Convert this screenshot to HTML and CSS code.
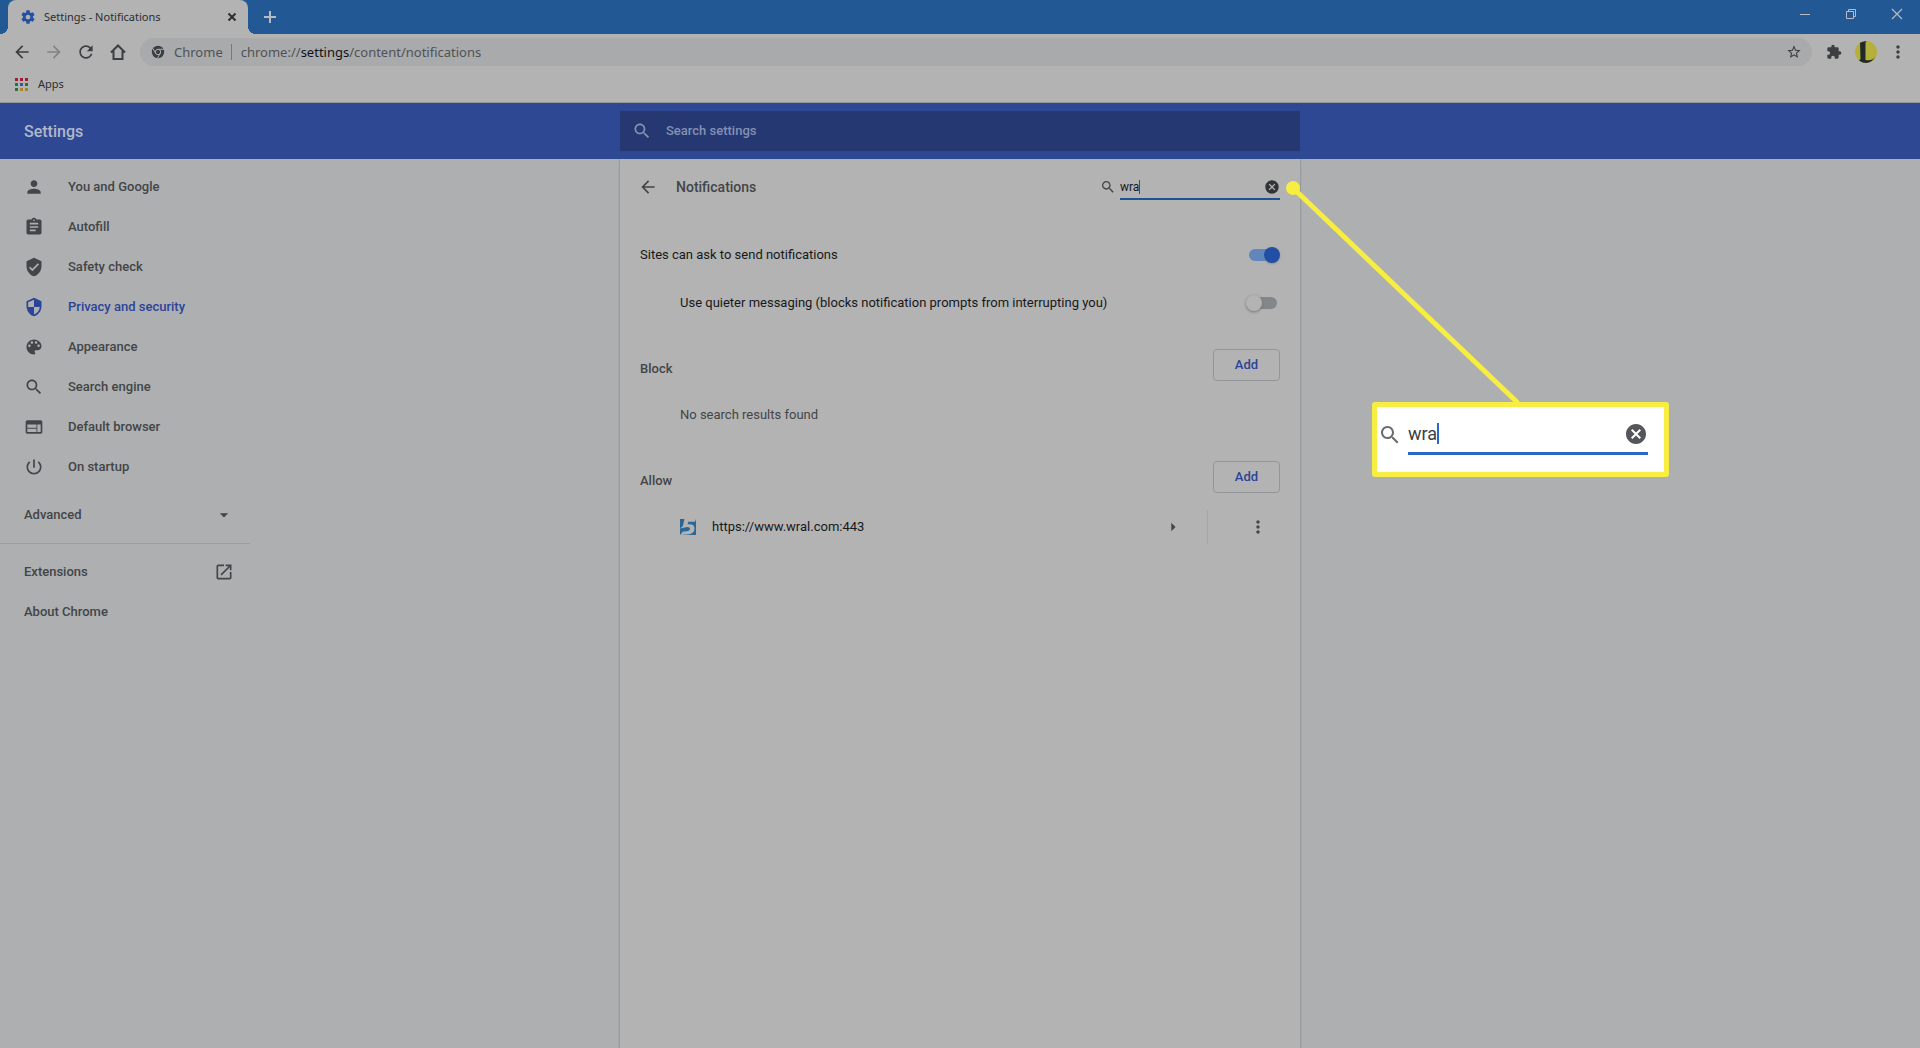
FILE: index.html
```html
<!DOCTYPE html>
<html lang="en">
<head>
<meta charset="utf-8">
<title>Settings - Notifications</title>
<link rel="stylesheet" href="styles.css">
</head>
<body>
<svg class="sprite" aria-hidden="true">
  <symbol id="search" viewBox="0 0 24 24"><path d="M15.5 14h-.79l-.28-.27C15.41 12.59 16 11.11 16 9.5 16 5.91 13.09 3 9.5 3S3 5.91 3 9.5 5.91 16 9.5 16c1.61 0 3.09-.59 4.23-1.57l.27.28v.79l5 4.99L20.49 19l-4.99-5zm-6 0C7.01 14 5 11.99 5 9.5S7.01 5 9.5 5 14 7.01 14 9.5 11.99 14 9.5 14z"/></symbol>
  <symbol id="back" viewBox="0 0 24 24"><path d="M20 11H7.83l5.59-5.59L12 4l-8 8 8 8 1.41-1.41L7.83 13H20v-2z"/></symbol>
  <symbol id="cancel" viewBox="0 0 24 24"><path d="M12 2C6.47 2 2 6.47 2 12s4.47 10 10 10 10-4.47 10-10S17.53 2 12 2zm5 13.59L15.59 17 12 13.41 8.41 17 7 15.59 10.59 12 7 8.41 8.41 7 12 10.59 15.59 7 17 8.41 13.41 12 17 15.59z"/></symbol>
  <symbol id="dots" viewBox="0 0 24 24"><path d="M12 8c1.1 0 2-.9 2-2s-.9-2-2-2-2 .9-2 2 .9 2 2 2zm0 2c-1.1 0-2 .9-2 2s.9 2 2 2 2-.9 2-2-.9-2-2-2zm0 6c-1.1 0-2 .9-2 2s.9 2 2 2 2-.9 2-2-.9-2-2-2z"/></symbol>
</svg>

<header class="browser">
  <div class="tabstrip">
    <div class="tab">
      <svg class="icon tab-icon" viewBox="0 0 24 24"><path d="M19.43 12.98c.04-.32.07-.64.07-.98s-.03-.66-.07-.98l2.11-1.65c.19-.15.24-.42.12-.64l-2-3.46c-.12-.22-.39-.3-.61-.22l-2.49 1c-.52-.4-1.08-.73-1.69-.98l-.38-2.65C14.46 2.18 14.25 2 14 2h-4c-.25 0-.46.18-.49.42l-.38 2.65c-.61.25-1.17.59-1.69.98l-2.49-1c-.23-.09-.49 0-.61.22l-2 3.46c-.13.22-.07.49.12.64l2.11 1.65c-.04.32-.07.65-.07.98s.03.66.07.98l-2.11 1.65c-.19.15-.24.42-.12.64l2 3.46c.12.22.39.3.61.22l2.49-1c.52.4 1.08.73 1.69.98l.38 2.65c.03.24.24.42.49.42h4c.25 0 .46-.18.49-.42l.38-2.65c.61-.25 1.17-.59 1.69-.98l2.49 1c.23.09.49 0 .61-.22l2-3.46c.12-.22.07-.49-.12-.64l-2.11-1.65zM12 15.5c-1.93 0-3.5-1.57-3.5-3.5s1.57-3.5 3.5-3.5 3.5 1.57 3.5 3.5-1.57 3.5-3.5 3.5z"/></svg>
      <span class="tab-title">Settings - Notifications</span>
      <button class="plain tab-close" aria-label="Close tab"><svg class="line" viewBox="0 0 16 16" width="16" height="16"><path d="M4.500 4.500l7 7M11.500 4.500l-7 7" stroke-width="2"/></svg></button>
    </div>
    <button class="plain new-tab" aria-label="New tab"><svg class="line" viewBox="0 0 16 16" width="16" height="16"><path d="M8 2v12M2 8h12" stroke-width="2"/></svg></button>
    <div class="window-controls">
      <button class="plain" aria-label="Minimize"><svg class="line" viewBox="0 0 12 12" width="12" height="12"><path d="M1 6.5h10"/></svg></button>
      <button class="plain" aria-label="Restore"><svg class="line" viewBox="0 0 12 12" width="12" height="12"><path d="M1.500 3.500h7v7h-7zM3.500 3.500v-2h7v7h-2"/></svg></button>
      <button class="plain" aria-label="Close"><svg class="line" viewBox="0 0 12 12" width="12" height="12"><path d="M1 1l10 10M11 1L1 11" stroke-width="1.200"/></svg></button>
    </div>
  </div>

  <div class="toolbar">
    <div class="tools">
      <button class="plain tool" aria-label="Back"><svg class="icon"><use href="#back"/></svg></button>
      <button class="plain tool off" aria-label="Forward"><svg class="icon" viewBox="0 0 24 24"><path d="M12 4l-1.410 1.410L16.170 11H4v2h12.170l-5.580 5.590L12 20l8-8z"/></svg></button>
      <button class="plain tool" aria-label="Reload"><svg class="icon reload" viewBox="0 0 24 24"><path d="M17.650 6.350C16.200 4.900 14.210 4 12 4c-4.420 0-7.990 3.580-7.990 8s3.570 8 7.990 8c3.730 0 6.840-2.550 7.730-6h-2.080c-.82 2.330-3.040 4-5.650 4-3.310 0-6-2.690-6-6s2.690-6 6-6c1.660 0 3.140.69 4.220 1.780L13 11h7V4l-2.350 2.350z"/></svg></button>
      <button class="plain tool" aria-label="Home"><svg class="line" viewBox="0 0 20 20" width="20" height="20"><path d="M3 10.500L10 3.500l7 7M5.500 9v8h9V9" stroke-width="2"/></svg></button>
    </div>
    <div class="omnibox">
      <svg class="chrome-mark" viewBox="0 0 20 20" width="20" height="20"><circle cx="10" cy="10" r="6.200"/><circle class="ring" cx="10" cy="10" r="2.700"/><path class="ring" d="M10 7.300h6M7.700 11.300L4.700 6.200M12.300 11.300l-3 5.200"/></svg>
      <span class="origin">Chrome</span>
      <div class="url" role="textbox" contenteditable="true" spellcheck="false" aria-label="Address">chrome://<b>settings</b>/content/notifications</div>
      <button class="plain star" aria-label="Bookmark this tab"><svg class="icon" viewBox="0 0 24 24"><path d="M22 9.240l-7.190-.62L12 2 9.190 8.630 2 9.240l5.460 4.730L5.820 21 12 17.270 18.180 21l-1.630-7.030L22 9.240zM12 15.400l-3.760 2.270 1-4.280-3.320-2.880 4.380-.38L12 6.100l1.710 4.040 4.380.38-3.320 2.880 1 4.280L12 15.400z"/></svg></button>
    </div>
    <div class="tools">
      <button class="plain tool" aria-label="Extensions"><svg class="icon puzzle" viewBox="0 0 24 24"><path d="M20.500 11H19V7c0-1.100-.9-2-2-2h-4V3.500C13 2.120 11.880 1 10.500 1S8 2.120 8 3.500V5H4c-1.100 0-1.990.9-1.990 2v3.800H3.500c1.490 0 2.700 1.210 2.700 2.700s-1.210 2.700-2.700 2.700H2V20c0 1.100.9 2 2 2h3.800v-1.500c0-1.490 1.210-2.700 2.700-2.700 1.490 0 2.700 1.210 2.700 2.700V22H17c1.100 0 2-.9 2-2v-4h1.500c1.380 0 2.500-1.120 2.500-2.500S21.880 11 20.500 11z"/></svg></button>
      <button class="plain tool" aria-label="Profile"><svg viewBox="0 0 22 22" width="22" height="22"><circle cx="11" cy="11" r="11" fill="#b5b03c"/><path d="M5 1.800Q7.500.4 11.500 0L10.500 1.800V19Q17 20.500 20.500 15.500 17 22 11 22 7.500 22 4 19.500L5.500 18z" fill="#22292b"/></svg></button>
      <button class="plain tool" aria-label="Menu"><svg class="icon"><use href="#dots"/></svg></button>
    </div>
  </div>

  <div class="bookmarks">
    <a class="apps" href="#apps">
      <svg viewBox="0 0 13 13" width="13" height="13"><path fill="#a01c30" d="M0 0h3v3H0zM5 0h3v3H5zM10 0h3v3h-3z"/><path fill="#26733a" d="M0 5h3v3H0zM0 10h3v3H0z"/><path fill="#3158a8" d="M5 5h3v3H5z"/><path fill="#26733a" d="M10 5h3v3h-3z"/><path fill="#a8842a" d="M5 10h3v3H5zM10 10h3v3h-3z"/></svg>
      Apps
    </a>
  </div>
</header>

<div class="appbar">
  <h1>Settings</h1>
  <label class="site-search">
    <svg class="icon"><use href="#search"/></svg>
    <input type="search" placeholder="Search settings" aria-label="Search settings">
  </label>
</div>

<div class="page">
  <nav class="sidebar">
    <a class="item" href="#people"><svg class="icon" viewBox="0 0 24 24"><path d="M12 12c2.210 0 4-1.790 4-4s-1.790-4-4-4-4 1.790-4 4 1.790 4 4 4zm0 2c-2.670 0-8 1.340-8 4v2h16v-2c0-2.660-5.330-4-8-4z"/></svg>You and Google</a>
    <a class="item" href="#autofill"><svg class="icon" viewBox="0 0 24 24"><path d="M19 3h-4.180C14.400 1.840 13.300 1 12 1c-1.300 0-2.400.84-2.820 2H5c-1.100 0-2 .9-2 2v14c0 1.100.9 2 2 2h14c1.100 0 2-.9 2-2V5c0-1.100-.9-2-2-2zm-7 0c.55 0 1 .45 1 1s-.45 1-1 1-1-.45-1-1 .45-1 1-1zm2 14H7v-2h7v2zm3-4H7v-2h10v2zm0-4H7V7h10v2z"/></svg>Autofill</a>
    <a class="item" href="#safety"><svg class="icon" viewBox="0 0 24 24"><path d="M12 1L3 5v6c0 5.550 3.840 10.740 9 12 5.160-1.260 9-6.450 9-12V5l-9-4zm-2 16l-4-4 1.410-1.410L10 14.170l6.590-6.590L18 9l-8 8z"/></svg>Safety check</a>
    <a class="item current" href="#privacy"><svg class="icon" viewBox="0 0 24 24"><path d="M12 1L3 5v6c0 5.550 3.840 10.740 9 12 5.160-1.260 9-6.450 9-12V5l-9-4zm0 10.990h7c-.53 4.120-3.280 7.790-7 8.940V12H5V6.300l7-3.110v8.800z"/></svg>Privacy and security</a>
    <a class="item" href="#appearance"><svg class="icon" viewBox="0 0 24 24"><path d="M12 3c-4.970 0-9 4.030-9 9s4.030 9 9 9c.83 0 1.500-.67 1.500-1.500 0-.39-.15-.74-.39-1.010-.23-.26-.38-.61-.38-.99 0-.83.67-1.500 1.500-1.500H16c2.760 0 5-2.240 5-5 0-4.420-4.030-8-9-8zm-5.500 9c-.83 0-1.500-.67-1.500-1.500S5.670 9 6.500 9 8 9.670 8 10.500 7.330 12 6.500 12zm3-4C8.670 8 8 7.330 8 6.500S8.670 5 9.500 5s1.500.67 1.500 1.500S10.330 8 9.500 8zm5 0c-.83 0-1.500-.67-1.500-1.500S13.670 5 14.500 5s1.500.67 1.500 1.500S15.330 8 14.500 8zm3 4c-.83 0-1.500-.67-1.500-1.500S16.670 9 17.500 9s1.500.67 1.500 1.500-.67 1.500-1.500 1.500z"/></svg>Appearance</a>
    <a class="item" href="#search-engine"><svg class="icon"><use href="#search"/></svg>Search engine</a>
    <a class="item" href="#default-browser"><svg class="icon" viewBox="0 0 24 24"><path d="M20 4H4c-1.100 0-1.990.9-1.990 2L2 18c0 1.100.9 2 2 2h16c1.100 0 2-.9 2-2V6c0-1.100-.9-2-2-2zm-5 14H4v-4h11v4zm0-5H4V9h11v4zm5 5h-4V9h4v9z"/></svg>Default browser</a>
    <a class="item" href="#startup"><svg class="icon" viewBox="0 0 24 24"><path d="M13 3h-2v10h2V3zm4.830 2.170l-1.420 1.420C17.990 7.860 19 9.810 19 12c0 3.870-3.130 7-7 7s-7-3.130-7-7c0-2.190 1.010-4.140 2.580-5.420L6.170 5.170C4.230 6.820 3 9.260 3 12c0 4.970 4.030 9 9 9s9-4.030 9-9c0-2.740-1.230-5.180-3.170-6.830z"/></svg>On startup</a>
    <button class="plain item spread advanced">Advanced<svg class="icon" viewBox="0 0 24 24"><path d="M7 10l5 5 5-5z"/></svg></button>
    <hr>
    <a class="item spread" href="#extensions">Extensions<svg class="icon" viewBox="0 0 24 24"><path d="M19 19H5V5h7V3H5c-1.110 0-2 .9-2 2v14c0 1.100.89 2 2 2h14c1.100 0 2-.9 2-2v-7h-2v7zM14 3v2h3.590l-9.830 9.830 1.410 1.410L19 6.410V10h2V3h-7z"/></svg></a>
    <a class="item spread" href="#about">About Chrome</a>
  </nav>

  <main class="card">
    <div class="card-head">
      <button class="plain" aria-label="Back to Site Settings"><svg class="icon"><use href="#back"/></svg></button>
      <h2>Notifications</h2>
      <div class="find">
        <svg class="icon"><use href="#search"/></svg>
        <div class="find-field">
          <input type="text" value="wra" aria-label="Search"><span class="caret"></span>
          <button class="plain clear" aria-label="Clear search"><svg class="icon"><use href="#cancel"/></svg></button>
        </div>
      </div>
    </div>

    <div class="option">
      <label for="ask">Sites can ask to send notifications</label>
      <input class="switch" type="checkbox" id="ask" checked>
    </div>
    <div class="option nested">
      <label for="quiet">Use quieter messaging (blocks notification prompts from interrupting you)</label>
      <input class="switch" type="checkbox" id="quiet">
    </div>

    <section class="list">
      <div class="list-head"><h3>Block</h3><button class="add">Add</button></div>
      <p class="empty">No search results found</p>
    </section>

    <section class="list">
      <div class="list-head"><h3>Allow</h3><button class="add">Add</button></div>
      <div class="site">
        <svg viewBox="0 0 16 16" width="16" height="16"><path fill="#2a6796" d="M0 0h16v16H0z"/><path fill="#b3b3b3" d="M4.500 0H16L15 2.800H8.200L7.600 5.300Q14.500 4.500 14.500 9.500 14.500 15 7 15.500L0 16l3-3.500Q10 12.800 10 9.800 10 7.600 6 8.200L0 9.500 2.800 7.200z"/></svg>
        <a class="site-name" href="#site">https://www.wral.com:443</a>
        <button class="plain" aria-label="Site details"><svg class="icon" viewBox="0 0 24 24"><path d="M10 7l5 5-5 5z"/></svg></button>
        <div class="site-more"><button class="plain" aria-label="More actions"><svg class="icon"><use href="#dots"/></svg></button></div>
      </div>
    </section>

    <div class="callout">
      <svg class="pointer" viewBox="0 0 236 224" width="236" height="224"><circle cx="8" cy="8" r="7"/><path d="M8 8l225 215"/></svg>
      <div class="callout-box">
        <svg class="icon"><use href="#search"/></svg>
        <div class="find-field">
          <input type="text" value="wra" aria-label="Search, enlarged"><span class="caret"></span>
          <button class="plain clear" aria-label="Clear search, enlarged"><svg class="icon"><use href="#cancel"/></svg></button>
        </div>
      </div>
    </div>
  </main>
</div>
</body>
</html>
```
FILE: styles.css
```css
:root {
  --surface: #b3b3b3;
  --page: #adafb0;
  --ink: #17181a;
  --grey: #434548;
  --blue: #2f4893;
  --link: #2b449a;
  --accent: #1f5199;
  --yellow: #f8ee42;
}

* { box-sizing: border-box; }

body {
  margin: 0;
  min-height: 100vh;
  display: flex;
  flex-direction: column;
  background: var(--page);
  color: var(--ink);
  font: 13px/20px Roboto, "Liberation Sans", sans-serif;
}

h1, h2, h3, p { margin: 0; }
a { color: inherit; text-decoration: none; }
input { font: inherit; color: inherit; border: 0; padding: 0; margin: 0; background: none; outline: 0; }
svg { display: block; flex: none; }
.sprite { position: absolute; width: 0; height: 0; }
.icon { width: 20px; height: 20px; fill: currentColor; }
.line { fill: none; stroke: currentColor; }
.plain {
  display: flex;
  align-items: center;
  justify-content: center;
  padding: 0;
  border: 0;
  background: none;
  color: inherit;
  font: inherit;
}

/* Browser window */
.browser {
  background: var(--surface);
  border-bottom: 1px solid #96989b;
  font-family: "Noto Sans", "Open Sans", sans-serif;
}
.tabstrip { display: flex; height: 34px; padding-left: 8px; background: #225893; color: #b8bcc2; }
.tab {
  display: flex;
  align-items: center;
  width: 240px;
  padding: 0 8px 0 12px;
  border-radius: 8px 8px 0 0;
  background: var(--surface);
  color: #2c2e31;
  font-size: 11px;
  position: relative;
}
/* Flared feet that join the tab to the toolbar */
.tab::before, .tab::after { content: ""; position: absolute; bottom: 0; width: 8px; height: 8px; }
.tab::before { right: 100%; background: radial-gradient(circle at 0 0, transparent 8px, var(--surface) 8px); }
.tab::after { left: 100%; background: radial-gradient(circle at 100% 0, transparent 8px, var(--surface) 8px); }
.tab-icon { width: 16px; height: 16px; color: #2550a0; }
.tab-title { flex: 1; margin-left: 8px; white-space: nowrap; }
.new-tab { width: 28px; margin-left: 8px; }
.window-controls { display: flex; margin-left: auto; height: 28px; }
.window-controls .plain { width: 46px; }

.toolbar { display: flex; align-items: center; gap: 6px; height: 36px; padding: 0 6px; color: #3c3e41; }
.tools { display: flex; }
.tool { width: 32px; height: 32px; }
.tool .icon { width: 20px; height: 20px; }
.tool .puzzle { width: 16px; height: 16px; }
.off { color: #838487; }
.omnibox {
  flex: 1;
  display: flex;
  align-items: center;
  height: 28px;
  padding: 0 8px;
  border-radius: 14px;
  background: #a9aaac;
  color: #505255;
  font-size: 13px;
}
.chrome-mark { fill: #3c3e41; }
.ring { fill: #3c3e41; stroke: #a9aaac; stroke-width: 1; }
.origin { margin: 0 9px 0 6px; padding-right: 8px; border-right: 1px solid #77797c; line-height: 16px; }
.url { flex: 1; outline: 0; white-space: nowrap; }
.url b { color: #111214; font-weight: 400; }
.star { width: 20px; height: 20px; color: #3c3e41; }
.star .icon { width: 16px; height: 16px; }
.bookmarks { height: 32px; padding: 0 15px 4px; display: flex; align-items: center; }
.apps { display: flex; align-items: center; gap: 10px; color: #2c2e31; font-size: 11px; }

/* Settings title bar */
.appbar { display: grid; grid-template-columns: 1fr 680px 1fr; align-items: center; height: 56px; background: var(--blue); color: #b1b7ca; }
.appbar h1 { padding: 2px 0 0 24px; font-size: 16px; font-weight: 500; }
.site-search { display: flex; align-items: center; gap: 14px; height: 40px; padding: 0 12px; background: #263872; color: #8490b4; }
.site-search input { flex: 1; font-weight: 500; }
.site-search input::placeholder { color: inherit; opacity: 1; }

.page { flex: 1; display: grid; grid-template-columns: 1fr 682px 1fr; }

/* Side menu */
.sidebar { width: 250px; padding-top: 8px; color: var(--grey); font-weight: 500; }
.item { display: flex; align-items: center; justify-content: flex-start; gap: 24px; height: 40px; padding: 0 16px 0 24px; }
.spread { width: 100%; justify-content: space-between; }
.advanced { height: 48px; margin-top: 4px; }
.current { color: var(--link); }
.sidebar hr { margin: 4px 0 8px; border: 0; border-top: 1px solid #9b9da0; }

/* Content column */
.card {
  position: relative;
  padding: 0 20px;
  background: var(--surface);
  border: solid #999b9e;
  border-width: 0 1px;
  box-shadow: 0 2px 2px #9fa1a4;
}
.card-head { display: flex; align-items: center; height: 56px; padding-left: 18px; margin-left: -20px; color: var(--grey); }
.card-head h2 { flex: 1; margin-left: 18px; font-size: 14px; font-weight: 500; }
.find { display: flex; align-items: center; gap: 4px; }
.find > .icon { width: 16px; height: 16px; }
.find-field { display: flex; align-items: center; width: 160px; height: 26px; padding-top: 2px; border-bottom: 2px solid var(--accent); color: var(--ink); font-size: 12px; }
.find-field input { field-sizing: content; }
.caret { width: 1px; height: 14px; background: var(--accent); }
.clear { margin-left: auto; color: #323437; }
.find .clear .icon { width: 16px; height: 16px; }

.option { display: flex; align-items: center; justify-content: space-between; height: 48px; }
.card-head + .option { margin-top: 16px; }
.nested { padding-left: 40px; }
.switch { appearance: none; position: relative; width: 34px; height: 16px; }
.switch::before { content: ""; position: absolute; inset: 2px 3px; border-radius: 6px; background: #84878a; }
.switch::after { content: ""; position: absolute; left: 0; top: 0; width: 16px; height: 16px; border-radius: 50%; background: #b3b3b3; box-shadow: 0 1px 3px #707275; }
.switch:checked::before { background: #6186bb; }
.switch:checked::after { left: 18px; background: #214fa5; box-shadow: 0 1px 2px #8a8d90; }

.list { height: 112px; padding-top: 22px; }
.list-head { display: flex; align-items: center; justify-content: space-between; }
.list-head h3 { padding-top: 8px; color: var(--grey); font-size: 13px; font-weight: 500; }
.add { width: 67px; height: 32px; padding: 0; border: 1px solid #939598; border-radius: 4px; background: none; color: var(--link); font: 500 13px/20px Roboto, sans-serif; }
.empty { padding: 24px 0 0 40px; color: var(--grey); }
.site { display: flex; align-items: center; height: 34px; margin: 17px 0 0 40px; color: var(--grey); }
.site-name { flex: 1; margin-left: 16px; color: var(--ink); }
.site-more { display: flex; align-items: center; justify-content: center; width: 73px; height: 34px; margin-left: 24px; padding-left: 27px; border-left: 1px solid #a5a6a8; }

/* Enlarged view of the search field, tied to it by a line */
.callout { position: absolute; left: 665px; top: 21px; }
.pointer { fill: var(--yellow); stroke: var(--yellow); stroke-width: 5; }
.pointer circle { stroke: none; }
.callout-box {
  position: absolute;
  left: 87px;
  top: 222px;
  display: flex;
  align-items: flex-start;
  gap: 6px;
  width: 297px;
  height: 75px;
  padding: 8px 16px 0 1px;
  border: 5px solid var(--yellow);
  border-radius: 3px;
  background: #fff;
  color: #6a6c70;
}
.callout-box > .icon { width: 24px; height: 24px; margin-top: 8px; }
.callout-box .find-field { width: 240px; height: 40px; padding: 0; border-bottom: 3px solid #2a66cc; color: #3c3e42; font-size: 18px; }
.callout-box .caret { height: 21px; width: 2px; background: #2a66cc; }
.callout-box .clear { color: #54565c; }
.callout-box .clear .icon { width: 24px; height: 24px; }
```
